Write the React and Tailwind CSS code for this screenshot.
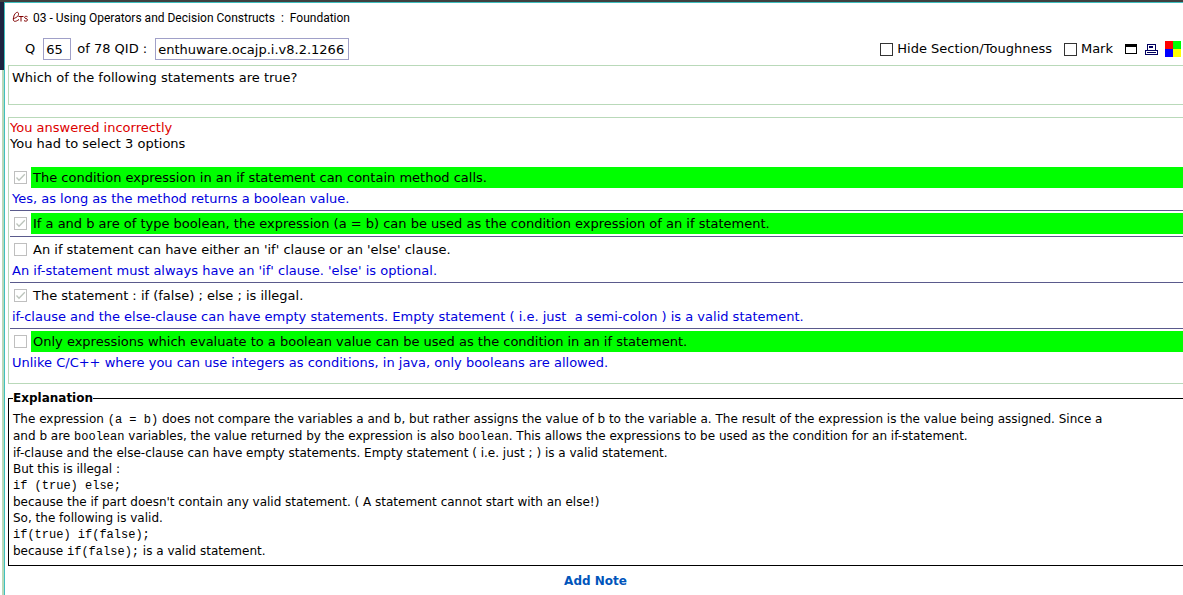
const options = [
  { text: "The condition expression in an if statement can contain method calls.", note: "Yes, as long as the method returns a boolean value.", checked: true, correct: true },
  { text: "If a and b are of type boolean, the expression (a = b) can be used as the condition expression of an if statement.", note: "", checked: true, correct: true },
  { text: "An if statement can have either an 'if' clause or an 'else' clause.", note: "An if-statement must always have an 'if' clause. 'else' is optional.", checked: false, correct: false },
  { text: "The statement : if (false) ; else ; is illegal.", note: "if-clause and the else-clause can have empty statements. Empty statement ( i.e. just  a semi-colon ) is a valid statement.", checked: true, correct: false },
  { text: "Only expressions which evaluate to a boolean value can be used as the condition in an if statement.", note: "Unlike C/C++ where you can use integers as conditions, in java, only booleans are allowed.", checked: false, correct: true },
];

function Code({ children }) {
  return <code className="font-['Liberation_Mono',monospace] text-[12px] leading-none whitespace-pre">{children}</code>;
}

function Option({ id, option }) {
  return (
    <li className="border-t border-[#5a5a8c] pt-0.5 first:border-t-0 first:pt-0">
      <div className="flex items-center">
        <span className="ml-1 mr-1 grid size-[13px] shrink-0">
          <input
            id={id}
            type="checkbox"
            disabled
            defaultChecked={option.checked}
            className="peer col-start-1 row-start-1 size-[13px] appearance-none border border-[#bfbfbf] bg-white"
          />
          <svg viewBox="0 0 13 13" className="pointer-events-none col-start-1 row-start-1 hidden size-[13px] peer-checked:block" fill="none" stroke="#bcc4bc" aria-hidden="true">
            <path d="M2.5 6.5 5 9.2 10.8 3.2" strokeWidth="1.3" />
          </svg>
        </span>
        <label htmlFor={id} className={option.correct ? "h-[21px] grow bg-[#00ff00] pl-0.5 leading-[21px]" : "h-[21px] grow pl-0.5 leading-[21px]"}>
          {option.text}
        </label>
      </div>
      {option.note ? (
        <p className="h-[22px] whitespace-pre pl-0.5 leading-[22px] text-[#0000dd]">{option.note}</p>
      ) : (
        <div className="h-0.5" />
      )}
    </li>
  );
}

function WindowIcon() {
  return (
    <svg viewBox="0 0 12 10" className="h-[10px] w-3" shapeRendering="crispEdges" aria-hidden="true">
      <path d="M0 0h12v10H0zM1 3v6h10V3z" fill="#000" fillRule="evenodd" />
    </svg>
  );
}

function PrinterIcon() {
  return (
    <svg viewBox="0 0 13 11" className="h-[11px] w-[13px]" shapeRendering="crispEdges" fill="#000060" aria-hidden="true">
      <path d="M2 0h9v1H2zM2 1h1v5H2zM10 1h1v5h-1zM4 2h4v2H4zM0 6h13v1H0zM0 7h1v4H0zM12 7h1v4h-1zM2 8h9v1H2zM1 10h11v1H1z" />
    </svg>
  );
}

function ColorIcon() {
  return (
    <svg viewBox="0 0 16 16" className="size-4" shapeRendering="crispEdges" aria-hidden="true">
      <path d="M0 0h8v8H0z" fill="#f00" />
      <path d="M8 0h8v8H8z" fill="#0f0" />
      <path d="M0 8h8v8H0z" fill="#00f" />
      <path d="M8 8h8v8H8z" fill="#ff0" />
    </svg>
  );
}

export default function App() {
  return (
    <div className="flex min-h-screen flex-col bg-[#404040] pt-0.5 font-['DejaVu_Sans',sans-serif] text-[13px] text-black">
      <div className="flex grow">
        <div className="flex w-1 shrink-0 flex-col bg-white">
          <div className="h-[68px] bg-[#1c2340]" />
          <div className="ml-0.5 grow bg-[#b9d9b9]" />
        </div>
        <main className="min-w-0 grow border-l border-t border-[#3fbfbf] bg-white pl-[3px]">
          <header className="flex h-[30px] items-center gap-1 pl-1 font-['Roboto',sans-serif] text-[12px]">
            <svg viewBox="0 0 17 12" className="mb-0.5 h-3 w-[17px]" fill="none" stroke="#800000" aria-hidden="true">
              <path d="M1 7.500c3-.3 6-2.500 5.500-5S2.500 1.500 1.500 6.500 3.500 11 7 8.500M6.500 5.500h5M9 5.500v5M15.500 5.800c-1.500-1-3-.3-3 .7s3 .9 3 2.300-2 1.800-3.500.8" />
            </svg>
            <h1 className="whitespace-pre">03 - Using Operators and Decision Constructs  :  Foundation</h1>
          </header>
          <div className="flex h-8 items-center">
            <label htmlFor="question" className="pl-[17px]">Q</label>
            <input id="question" defaultValue="65" className="ml-2 h-[22px] w-7 border border-[#a0a0c8] px-0.5 outline-none" />
            <label htmlFor="qid" className="ml-1.5 whitespace-pre">of 78 QID :</label>
            <input id="qid" readOnly defaultValue="enthuware.ocajp.i.v8.2.1266" className="ml-2 h-[22px] w-[194px] border border-[#a0a0c8] px-0.5 outline-none" />
            <div className="ml-auto flex items-center">
              <input id="hide" type="checkbox" className="mr-1 size-[13px] appearance-none border border-[#333]" />
              <label htmlFor="hide">Hide Section/Toughness</label>
              <input id="mark" type="checkbox" className="ml-3 mr-1 size-[13px] appearance-none border border-[#333]" />
              <label htmlFor="mark">Mark</label>
              <button type="button" aria-label="Window" className="ml-3"><WindowIcon /></button>
              <button type="button" aria-label="Print" className="ml-2"><PrinterIcon /></button>
              <button type="button" aria-label="Colors" className="ml-[7px] mr-0.5"><ColorIcon /></button>
            </div>
          </div>
          <section className="h-10 border border-r-0 border-[#b9d9b9] pl-[3px] pt-1 leading-4">
            Which of the following statements are true?
          </section>
          <section className="mt-3 border border-r-0 border-[#b9d9b9] pb-[9px] pl-px pt-0.5">
            <p className="leading-4 text-[#dd0000]">You answered incorrectly</p>
            <p className="leading-4">You had to select 3 options</p>
            <ul className="pt-[15px]">
              {options.map((option, index) => (
                <Option key={option.text} id={"option-" + index} option={option} />
              ))}
            </ul>
          </section>
          <fieldset className="mt-1.5 border border-r-0 border-black pb-1.5 pl-1">
            <legend className="text-[12px] font-bold leading-4">Explanation</legend>
            <div className="pr-4 pt-[5px] text-[12px] leading-4">
              <p className="leading-[17px]">
                The expression <Code>(a = b)</Code> does not compare the variables a and b, but rather assigns the value of b to the variable a. The result of the expression is the value being assigned. Since a
                <br />
                and b are <Code>boolean</Code> variables, the value returned by the expression is also <Code>boolean</Code>. This allows the expressions to be used as the condition for an if-statement.
              </p>
              <p>if-clause and the else-clause can have empty statements. Empty statement ( i.e. just ; ) is a valid statement.</p>
              <p>But this is illegal :</p>
              <p className="leading-[17px]"><Code>if (true) else;</Code></p>
              <p>because the if part doesn't contain any valid statement. ( A statement cannot start with an else!)</p>
              <p>So, the following is valid.</p>
              <p className="leading-[17px]"><Code>if(true) if(false);</Code></p>
              <p>because <Code>if(false);</Code> is a valid statement.</p>
            </div>
          </fieldset>
          <div className="flex h-[29px] items-center justify-center">
            <button type="button" className="text-[12px] font-bold text-[#0055bb]">Add Note</button>
          </div>
        </main>
      </div>
    </div>
  );
}
